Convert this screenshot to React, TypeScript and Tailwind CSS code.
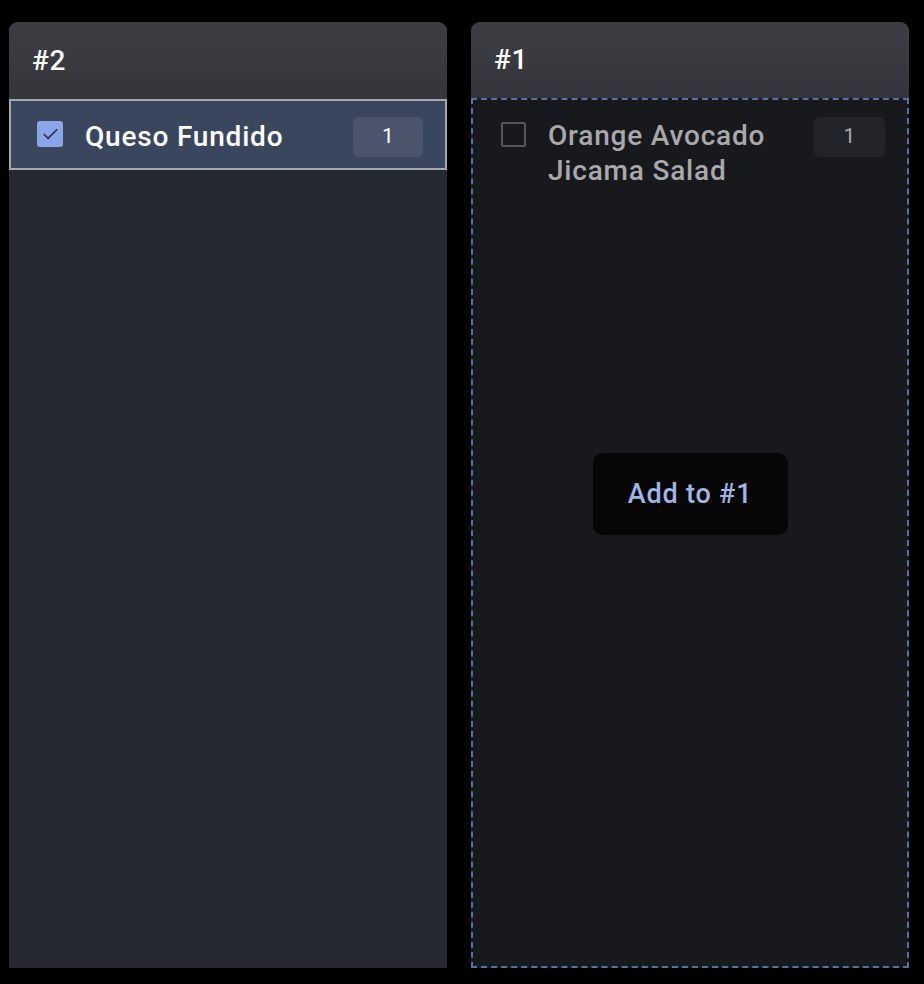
import { Check } from "lucide-react";

type Item = { name: string; count: number; checked?: boolean };

function Row({ item, selected }: { item: Item; selected?: boolean }) {
  return (
    <div
      className={
        selected
          ? "flex items-start gap-[22px] border-2 border-[#a3a7ae] bg-[#3a465e] pb-[11px] pl-[26px] pr-[22px] pt-[16px]"
          : "flex items-start gap-[22px] py-[17px] pl-[28px] pr-[22px]"
      }
    >
      {item.checked ? (
        <span className="mt-[4px] flex h-[26px] w-[26px] shrink-0 items-center justify-center rounded-[3px] bg-[#8ba5e9]">
          <Check size={19} strokeWidth={2.2} className="text-[#2b3550]" />
        </span>
      ) : (
        <span className="mt-[5px] h-[25px] w-[25px] shrink-0 rounded-[2px] border-2 border-[#55575c]" />
      )}
      <span
        className={
          selected
            ? "flex-1 pt-[2px] text-[28px] font-medium leading-[35px] tracking-[0.8px] text-white"
            : "flex-1 pt-[1px] text-[28px] font-medium leading-[35px] tracking-[0.8px] text-[#a9a9ab]"
        }
      >
        {item.name}
      </span>
      <span
        className={
          selected
            ? "flex h-[40px] w-[70px] shrink-0 items-center justify-center rounded-[6px] bg-[#4a556c] text-[21px] text-white"
            : "flex h-[40px] w-[71px] shrink-0 items-center justify-center rounded-[6px] bg-[#232428] text-[21px] text-[#a9a9ab]"
        }
      >
        {item.count}
      </span>
    </div>
  );
}

export default function App() {
  return (
    <div
      className="flex h-[984px] w-[924px] gap-[24px] bg-black pb-[16px] pl-[9px] pr-[15px] pt-[22px]"
      style={{ fontFamily: "Roboto, 'Noto Sans', sans-serif" }}
    >
      <section className="flex flex-1 flex-col overflow-hidden rounded-t-[9px] bg-[#262930]">
        <header className="flex h-[77px] shrink-0 items-center bg-gradient-to-b from-[#3c3e44] to-[#34363c] px-[23px] text-[28px] font-medium tracking-[0.6px] text-white">
          #2
        </header>
        <Row item={{ name: "Queso Fundido", count: 1, checked: true }} selected />
      </section>
      <section className="flex flex-1 flex-col overflow-hidden rounded-t-[9px] bg-[#18191d]">
        <header className="flex h-[76px] shrink-0 items-center bg-gradient-to-b from-[#3c3e44] to-[#34363c] px-[23px] text-[28px] font-medium tracking-[0.6px] text-white">
          #1
        </header>
        <div className="flex flex-1 flex-col border-2 border-dashed border-[#55739f]">
          <Row item={{ name: "Orange Avocado Jicama Salad", count: 1 }} />
          <div className="flex flex-1 items-start justify-center pt-[248px]">
            <button className="flex h-[82px] w-[195px] items-center justify-center rounded-[10px] bg-[#060606] text-[27px] font-medium tracking-[0.8px] text-[#9fb4e6]">
              Add to #1
            </button>
          </div>
        </div>
      </section>
    </div>
  );
}
